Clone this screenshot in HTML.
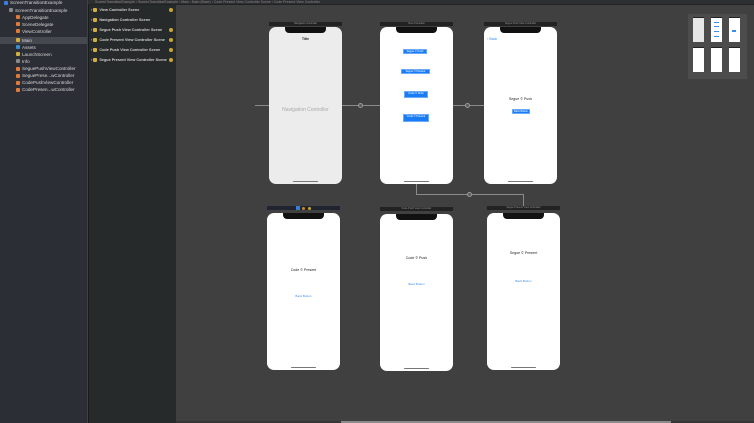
<!DOCTYPE html>
<html><head><meta charset="utf-8"><style>
*{margin:0;padding:0;box-sizing:border-box}
body{width:754px;height:423px;overflow:hidden;background:#404040;font-family:"Liberation Sans",sans-serif;position:relative}
.a{position:absolute}
#nav{left:0;top:0;width:87px;height:423px;background:#2b2e35}
#out{left:88px;top:0;width:88px;height:423px;background:#272a2b;border-left:1px solid #1a1a1a}
#top{left:88px;top:0;width:666px;height:5px;background:#2d2e30;border-bottom:1px solid #222}
.r{position:absolute;font-size:4.6px;color:#d8d8d8;white-space:nowrap;line-height:6px}
.o{font-size:3.8px;font-weight:bold;color:#cfcfcf}
.ic{display:inline-block;width:4px;height:4px;margin-right:2px;vertical-align:-0.5px;border-radius:1px}
.ph{position:absolute;width:73px;height:157px;background:#fff;border-radius:7px;overflow:hidden}
.ph .n{position:absolute;left:16px;top:0;width:41px;height:6px;background:#111;border-radius:0 0 4px 4px}
.ph .h{position:absolute;left:24px;bottom:2px;width:25px;height:1.5px;background:#777;border-radius:1px}
.bar{position:absolute;width:73px;height:4px;background:#222;font-size:2.5px;color:#999;text-align:center;line-height:4px}
.t{position:absolute;left:0;width:73px;text-align:center;font-size:3.6px;color:#222}
.bl{color:#3a8ef0}
.btn{position:absolute;background:#1a7cf5;border:1px solid #6aaaf8;font-size:2.6px;color:#fff;text-align:center}
.ln{position:absolute;background:#8a8a8a}
.c{position:absolute;width:5px;height:5px;border-radius:50%;background:#5a5a5a;border:1px solid #9a9a9a}
.mm{position:absolute;background:#fff;width:11px;height:25px;border-top:1px solid #222}
</style></head><body>
<div id="nav" class="a"></div>
<div id="out" class="a"></div>
<div id="top" class="a"></div>
<div class="r" style="left:95px;top:-1px;color:#888;font-size:3.5px">ScreenTransitionExample › ScreenTransitionExample › Main › Main (Base) › Code Present View Controller Scene › Code Present View Controller</div>

<div class="r" style="left:4px;top:0"><span class="ic" style="background:#3b7ddd"></span>ScreenTransitionExample</div>
<div class="r" style="left:9px;top:7.5px"><span class="ic" style="background:#888"></span>ScreenTransitionExample</div>
<div class="r" style="left:16px;top:14.5px"><span class="ic" style="background:#e07a3a"></span>AppDelegate</div>
<div class="r" style="left:16px;top:21.5px"><span class="ic" style="background:#e07a3a"></span>SceneDelegate</div>
<div class="r" style="left:16px;top:28.5px"><span class="ic" style="background:#e07a3a"></span>ViewController</div>
<div class="a" style="left:0;top:37px;width:87px;height:7px;background:#45484f"></div>
<div class="r" style="left:16px;top:37.5px"><span class="ic" style="background:#d0b040"></span>Main</div>
<div class="r" style="left:16px;top:44.5px"><span class="ic" style="background:#3a8ed0"></span>Assets</div>
<div class="r" style="left:16px;top:51.5px"><span class="ic" style="background:#d0b040"></span>LaunchScreen</div>
<div class="r" style="left:16px;top:58.5px"><span class="ic" style="background:#888"></span>Info</div>
<div class="r" style="left:16px;top:66px"><span class="ic" style="background:#e07a3a"></span>SeguePushViewController</div>
<div class="r" style="left:16px;top:73px"><span class="ic" style="background:#e07a3a"></span>SeguePrese...wController</div>
<div class="r" style="left:16px;top:80px"><span class="ic" style="background:#e07a3a"></span>CodePushViewController</div>
<div class="r" style="left:16px;top:87px"><span class="ic" style="background:#e07a3a"></span>CodePresen...wController</div>

<div class="r o" style="left:91px;top:7px">› <span class="ic" style="background:#d0b040"></span>View Controller Scene</div>
<div class="r o" style="left:91px;top:17px">› <span class="ic" style="background:#d0b040"></span>Navigation Controller Scene</div>
<div class="r o" style="left:91px;top:27px">› <span class="ic" style="background:#d0b040"></span>Segue Push View Controller Scene</div>
<div class="r o" style="left:91px;top:37px">› <span class="ic" style="background:#d0b040"></span>Code Present View Controller Scene</div>
<div class="r o" style="left:91px;top:47px">› <span class="ic" style="background:#d0b040"></span>Code Push View Controller Scene</div>
<div class="r o" style="left:91px;top:57px">› <span class="ic" style="background:#d0b040"></span>Segue Present View Controller Scene</div>
<div class="a" style="left:169px;top:8px;width:4px;height:4px;border-radius:50%;background:#c9a62c"></div>
<div class="a" style="left:169px;top:28px;width:4px;height:4px;border-radius:50%;background:#c9a62c"></div>
<div class="a" style="left:169px;top:38px;width:4px;height:4px;border-radius:50%;background:#c9a62c"></div>
<div class="a" style="left:169px;top:48px;width:4px;height:4px;border-radius:50%;background:#c9a62c"></div>
<div class="a" style="left:169px;top:58px;width:4px;height:4px;border-radius:50%;background:#c9a62c"></div>

<div class="ln" style="left:255px;top:105px;width:14px;height:1px"></div>
<div class="ln" style="left:342px;top:105px;width:38px;height:1px"></div>
<div class="c" style="left:358px;top:102.5px"></div>
<div class="ln" style="left:453px;top:105px;width:31px;height:1px"></div>
<div class="c" style="left:465px;top:102.5px"></div>
<div class="ln" style="left:416px;top:184px;width:1px;height:11px"></div>
<div class="ln" style="left:416px;top:194px;width:108px;height:1px"></div>
<div class="ln" style="left:523px;top:194px;width:1px;height:12px"></div>
<div class="c" style="left:467px;top:191.5px"></div>

<div class="bar" style="left:269px;top:22px">Navigation Controller</div>
<div class="ph" style="left:269px;top:27px;background:#ececec"><div class="n"></div><div class="t" style="top:10px;font-weight:bold">Title</div><div class="t" style="top:80px;font-size:5px;color:#aaa">Navigation Controller</div><div class="h"></div></div>
<div class="bar" style="left:380px;top:22px">View Controller</div>
<div class="ph" style="left:380px;top:27px"><div class="n"></div>
<div class="btn" style="left:23px;top:22px;width:24px;height:5px">Segue © Push</div>
<div class="btn" style="left:21px;top:42px;width:29px;height:5px">Segue © Present</div>
<div class="btn" style="left:24px;top:64px;width:24px;height:7px">Code © Push</div>
<div class="btn" style="left:23px;top:87px;width:26px;height:8px">Code © Present</div>
<div class="h"></div></div>
<div class="bar" style="left:484px;top:22px">Segue Push View Controller</div>
<div class="ph" style="left:484px;top:27px"><div class="n"></div>
<div class="t bl" style="left:3px;width:20px;top:10px;text-align:left">‹ Back</div>
<div class="t" style="top:70px">Segue © Push</div>
<div class="btn" style="left:28px;top:82px;width:18px;height:5px">Back Button</div>
<div class="h"></div></div>
<div class="bar" style="left:267px;top:206px;background:#1f2530"></div>
<div class="a" style="left:296px;top:206px;width:4px;height:4px;background:#3a7cd8"></div>
<div class="a" style="left:302px;top:207px;width:3px;height:3px;background:#c98a2c;border-radius:50%"></div>
<div class="a" style="left:308px;top:207px;width:3px;height:3px;background:#c9a62c;border-radius:50%"></div>
<div class="ph" style="left:267px;top:213px"><div class="n"></div>
<div class="t" style="top:55px">Code © Present</div>
<div class="t bl" style="top:81px;font-size:3px">Back Button</div>
<div class="h"></div></div>
<div class="bar" style="left:380px;top:207px">Code Push View Controller</div>
<div class="ph" style="left:380px;top:214px"><div class="n"></div>
<div class="t" style="top:42px">Code © Push</div>
<div class="t bl" style="top:68px;font-size:3px">Back Button</div>
<div class="h"></div></div>
<div class="bar" style="left:487px;top:206px">Segue Present View Controller</div>
<div class="ph" style="left:487px;top:213px"><div class="n"></div>
<div class="t" style="top:38px">Segue © Present</div>
<div class="t bl" style="top:66px;font-size:3px">Back Button</div>
<div class="h"></div></div>

<div class="a" style="left:688px;top:14px;width:59px;height:65px;background:#4c4c4c"></div>
<div class="mm" style="left:693px;top:17px;background:#e6e6e6"></div>
<div class="mm" style="left:711px;top:17px"></div>
<div class="a" style="left:714px;top:22px;width:5px;height:1px;background:#3a8ef0;box-shadow:0 4px #3a8ef0,0 9px #3a8ef0,0 14px #3a8ef0"></div>
<div class="mm" style="left:729px;top:17px"></div>
<div class="a" style="left:732px;top:30px;width:4px;height:2px;background:#3a8ef0"></div>
<div class="mm" style="left:693px;top:47px"></div>
<div class="mm" style="left:711px;top:47px"></div>
<div class="mm" style="left:729px;top:47px"></div>

<div class="a" style="left:176px;top:421px;width:578px;height:2px;background:#353535"></div>
<div class="a" style="left:341px;top:421px;width:330px;height:2px;background:#8a8a8a"></div>
</body></html>
